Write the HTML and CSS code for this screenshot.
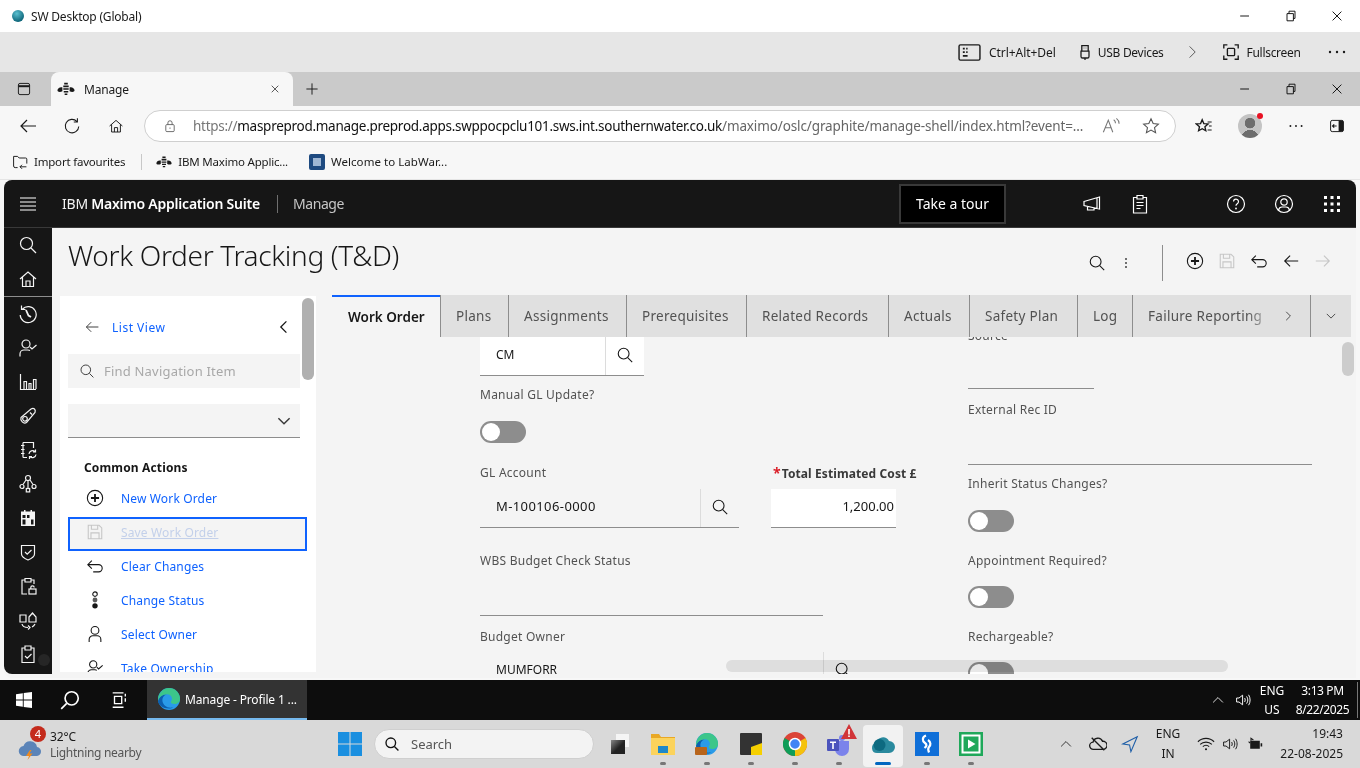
FILE: index.html
```html
<!DOCTYPE html>
<html lang="en">
<head>
    <meta charset="UTF-8">
    <meta name="viewport" content="width=device-width, initial-scale=1.0">
    <title>Manage</title>
    <link rel="stylesheet" href="styles.css">
</head>
<body>

<svg class="sprite" aria-hidden="true">
    <symbol id="i-search" viewBox="0 0 20 20"><circle cx="8.5" cy="8.5" r="6"/><path d="M13 13l5 5"/></symbol>
    <symbol id="i-home" viewBox="0 0 20 20"><path d="M2 10l8-7 8 7M4.5 8v9.5h11V8M8 17.500V12h4v5.500"/></symbol>
    <symbol id="i-history" viewBox="0 0 20 20"><path d="M4.500 5A8 8 0 1 1 2.200 11M3.500 1.500V5.500H7.500"/><path d="M8 6l2.500 5.500 2.500 1.500" stroke-width="1.800"/></symbol>
    <symbol id="i-usercheck" viewBox="0 0 20 20"><circle cx="8" cy="6" r="4"/><path d="M2 18.500V16a4 4 0 0 1 4-4h4a4 4 0 0 1 2 .6M12 9l2 2 4.500-4"/></symbol>
    <symbol id="i-chart" viewBox="0 0 20 20"><path d="M2.500 2V17.500H18M6 17V9.500H8.500V17M11 17V11.500H13V17M15.500 17V7.500H18V17"/></symbol>
    <symbol id="i-asset" viewBox="0 0 20 20"><path d="M3 11.500L13 3c3-1.500 5 .5 4 3.500L8.500 16.500c-3 2-6.500-2-5.500-5z"/><circle cx="7" cy="12.800" r="2.300"/><path d="M12 6.500l2 2"/></symbol>
    <symbol id="i-notes" viewBox="0 0 20 20"><path d="M5 2.500H15.500V8M5 17.500H9M5 2.500V17.500M3 5.500H6.500M3 9.500H6.500M3 13.500H6.500"/><path d="M11 14a3.500 3.500 0 0 1 6-2.300M18 14.500a3.500 3.500 0 0 1-6 2M17.500 9.500v2.500H15M11.500 19v-2.500H14"/></symbol>
    <symbol id="i-tree" viewBox="0 0 20 20"><circle cx="10" cy="4" r="2.500"/><path d="M8 6l-3 4.500M12 6l3 4.500M10 6.500v8"/><circle cx="4" cy="12.500" r="2"/><circle cx="16" cy="12.500" r="2"/><rect x="8.300" y="14.500" width="3.400" height="3.400"/></symbol>
    <symbol id="i-calendar" viewBox="0 0 20 20"><path class="solid" d="M3 3.500h3V2h1.500v1.500h5V2H14v1.500h3V18H3zM4.500 7v3h3V7zm4.500 0v3h2.500V7zM4.500 11.500v5h3v-5zm8.500 0v5h2.500v-5z"/></symbol>
    <symbol id="i-shield" viewBox="0 0 20 20"><path d="M3.500 3.500h13V12c0 3-4 5-6.500 6-2.500-1-6.500-3-6.500-6z"/><path d="M7 10l2.200 2.200L13.500 8"/></symbol>
    <symbol id="i-cliplock" viewBox="0 0 20 20"><path d="M7 4H4v14h5M13 4h3v4M7 2.500h6V6H7z"/><rect x="11" y="13" width="7" height="5"/><path d="M12.800 13v-1.500a1.700 1.700 0 0 1 3.400 0"/></symbol>
    <symbol id="i-cycle" viewBox="0 0 20 20"><path d="M2 5h6v7H2zM11 7l3.500-4L18 7v5h-7zM4 14c.5 2.500 3 3.500 6 3.500M10 15.500l2 2-2 2M17 14c-.5 1-1 2-3 3"/></symbol>
    <symbol id="i-clipcheck" viewBox="0 0 20 20"><path d="M7 4H4v14.500h12V4h-3M7 2h6v4H7zM7 12l2.200 2.200L13.500 10"/></symbol>
    <symbol id="i-arrow" viewBox="0 0 20 20"><path d="M18 10H3M9 4l-6 6 6 6"/></symbol>
    <symbol id="i-arrow-r" viewBox="0 0 20 20"><path d="M2 10h15M11 4l6 6-6 6"/></symbol>
    <symbol id="i-chev-l" viewBox="0 0 20 20"><path d="M13 3l-7 7 7 7"/></symbol>
    <symbol id="i-chev-r" viewBox="0 0 20 20"><path d="M7 3l7 7-7 7"/></symbol>
    <symbol id="i-chev-d" viewBox="0 0 20 20"><path d="M3 6.500l7 7 7-7"/></symbol>
    <symbol id="i-chev-u" viewBox="0 0 20 20"><path d="M3 13.500l7-7 7 7"/></symbol>
    <symbol id="i-plus" viewBox="0 0 20 20"><circle cx="10" cy="10" r="8.500"/><path d="M10 5.500v9M5.500 10h9" stroke-width="2"/></symbol>
    <symbol id="i-save" viewBox="0 0 20 20"><path d="M2.500 2.500h12l3 3v12h-15zM6 2.500V7h7V2.500M5.500 17.500V11h9v6.500"/></symbol>
    <symbol id="i-undo" viewBox="0 0 20 20"><path d="M6.500 4L2 8.500 6.500 13M2 8.500h12a4 4 0 0 1 0 8H8"/></symbol>
    <symbol id="i-status" viewBox="0 0 20 20"><circle cx="10" cy="3.500" r="2.500"/><circle class="solid" cx="10" cy="10" r="2.700" opacity=".7"/><circle class="solid" cx="10" cy="16.500" r="3"/></symbol>
    <symbol id="i-user" viewBox="0 0 20 20"><circle cx="10" cy="6" r="4.300"/><path d="M3.500 19v-3a4 4 0 0 1 4-4h5a4 4 0 0 1 4 4v3"/></symbol>
    <symbol id="i-megaphone" viewBox="0 0 20 20"><path d="M2 7.500L17.500 3v12L2 11.500zM5.500 12.500V16H12v-2.200M15 4v10.500"/></symbol>
    <symbol id="i-report" viewBox="0 0 20 20"><path d="M7 3.500H3.500V19h13V3.500H13M7 1.500h6V5H7zM6.500 8.500h7M6.500 11.500h7M6.500 14.500h4"/></symbol>
    <symbol id="i-help" viewBox="0 0 20 20"><circle cx="10" cy="10" r="8.500"/><path d="M7.500 7.500a2.500 2.500 0 1 1 3.800 2.200c-.8.500-1.300 1-1.300 2"/><circle class="solid" cx="10" cy="14.500" r=".9"/></symbol>
    <symbol id="i-account" viewBox="0 0 20 20"><circle cx="10" cy="10" r="8.500"/><circle cx="10" cy="8" r="3.200"/><path d="M4.500 16c.5-2 2-3 3.500-3h4c1.500 0 3 1 3.500 3"/></symbol>
    <symbol id="i-grid" viewBox="0 0 20 20"><path class="solid" d="M2 2h3v3H2zM8.500 2h3v3h-3zM15 2h3v3h-3zM2 8.500h3v3H2zM8.500 8.500h3v3h-3zM15 8.500h3v3h-3zM2 15h3v3H2zM8.500 15h3v3h-3zM15 15h3v3h-3z"/></symbol>
    <symbol id="i-menu" viewBox="0 0 20 20"><path d="M2 4h16M2 8h16M2 12h16M2 16h16"/></symbol>
    <symbol id="i-dots-v" viewBox="0 0 20 20"><path class="solid" d="M9 4h2v2H9zM9 9h2v2H9zM9 14h2v2H9z"/></symbol>
    <symbol id="i-dots-h" viewBox="0 0 20 20"><circle class="solid" cx="3" cy="10" r="1.200"/><circle class="solid" cx="10" cy="10" r="1.200"/><circle class="solid" cx="17" cy="10" r="1.200"/></symbol>
    <symbol id="i-min" viewBox="0 0 20 20"><path d="M4 10h11"/></symbol>
    <symbol id="i-restore" viewBox="0 0 20 20"><path d="M5 7h8v9H5zM7.500 7V4H15v9h-2"/></symbol>
    <symbol id="i-close" viewBox="0 0 20 20"><path d="M4.500 4.500l11 11M15.500 4.500l-11 11"/></symbol>
    <symbol id="i-newtab" viewBox="0 0 20 20"><path d="M10 3v14M3 10h14"/></symbol>
    <symbol id="i-tabs" viewBox="0 0 20 20"><rect x="3" y="3" width="14" height="14" rx="2"/><path d="M3 6.500h14" stroke-width="2.500"/></symbol>
    <symbol id="i-refresh" viewBox="0 0 20 20"><path d="M15.500 5A7.500 7.500 0 1 0 17.500 10.500M16 1.500V5.500H12"/></symbol>
    <symbol id="i-lock" viewBox="0 0 20 20"><rect x="4" y="8" width="12" height="10" rx="1.500"/><path d="M7 8V5.500a3 3 0 0 1 6 0V8"/><circle class="solid" cx="10" cy="13" r=".9"/></symbol>
    <symbol id="i-read" viewBox="0 0 20 20"><path d="M1.500 17L7 3.500 12 17M3.500 12h7M13 3c1.500 1 2 2.500 2 4M16 1.500c2 1.500 3 3.500 3 6"/></symbol>
    <symbol id="i-star" viewBox="0 0 20 20"><path d="M10 2l2.400 5.300 5.800.6-4.300 3.900 1.200 5.700-5.100-2.900-5.100 2.900 1.200-5.700-4.300-3.900 5.800-.6z"/></symbol>
    <symbol id="i-favs" viewBox="0 0 20 20"><path d="M8 3l1.800 4.300 4.700.4-3.500 3 1 4.600L8 13l-4 2.300 1-4.600-3.500-3 4.700-.4z" stroke-width="1.500"/><path d="M14 5.500h4.500M15.500 10h3M14 14.500h4.500"/></symbol>
    <symbol id="i-split" viewBox="0 0 20 20"><rect x="2" y="3" width="16" height="14" rx="2"/><path class="solid" d="M12 3h4a2 2 0 0 1 2 2v10a2 2 0 0 1-2 2h-4z"/><path d="M9.500 10h-5M6.500 8l-2 2 2 2" stroke-width="1.500"/></symbol>
    <symbol id="i-keyboard" viewBox="0 0 24 20"><rect x="1" y="2" width="22" height="16" rx="1.500" stroke-width="1.500"/><path d="M5 6h2M8.500 6h1.500M5 9.500h2M8.500 9.500h1.500M5 13.500h5" stroke-width="1.800"/></symbol>
    <symbol id="i-usb" viewBox="0 0 20 20"><path d="M6 2h8v7H6zM5 9h10v6.500a2 2 0 0 1-2 2H7a2 2 0 0 1-2-2zM10 17.500V20M8.500 5h.5M11 5h.5" stroke-width="1.600"/></symbol>
    <symbol id="i-fullscreen" viewBox="0 0 20 20"><path d="M2 6V2h4M14 2h4v4M18 14v4h-4M6 18H2v-4" stroke-width="1.500"/><rect x="6" y="6" width="8" height="8" rx="1" stroke-width="1.500"/></symbol>
    <symbol id="i-import" viewBox="0 0 20 20"><path d="M7 17H4a2 2 0 0 1-2-2V3h5l2 2h8a1.500 1.500 0 0 1 1.500 1.500V12M10 16h8M12.500 13.500L10 16l2.500 2.500"/></symbol>
    <symbol id="i-bee" viewBox="0 0 20 20"><path class="solid" d="M8 3h4v2H8zM7 6h6v2H7zM7 9.300h6v1.600H7zM7.500 12.200h5v1.600h-5zM8.500 15h3v1.600h-3zM.500 11.500c0-2.300 3-4.200 5.500-3.300v4.300c-2 1-5.500 1.200-5.500-1zM19.500 11.500c0-2.300-3-4.200-5.500-3.300v4.300c2 1 5.500 1.200 5.500-1z"/></symbol>
    <symbol id="i-speaker" viewBox="0 0 20 20"><path d="M2 7.500h3L9.500 4v12L5 12.500H2zM12 7.500c1 1.500 1 3.500 0 5M14.500 5.500c2 3 2 6 0 9M17 3.500c2.500 4 2.500 9 0 13"/></symbol>
    <symbol id="i-wifi" viewBox="0 0 20 20"><path d="M1 7.500c5-5 13-5 18 0M3.500 10.500c3.500-3.500 9.500-3.500 13 0M6.500 13c2-2 5-2 7 0"/><circle class="solid" cx="10" cy="15.800" r="1.200"/></symbol>
    <symbol id="i-battery" viewBox="0 0 20 20"><path class="solid" d="M4 6h12v10H4zM17 9h2v4h-2z"/><path d="M5 6V3l3 2M2 7l2 2" stroke-width="1.400"/></symbol>
    <symbol id="i-cloudoff" viewBox="0 0 20 20"><path d="M5 16a4 4 0 0 1-.5-8 5.500 5.500 0 0 1 10.500-1 4.500 4.500 0 0 1 1 9zM3 3l14 14" stroke-width="1.500"/></symbol>
    <symbol id="i-nav" viewBox="0 0 20 20"><path d="M18 2L2 10l7.500 1 1.500 7.500z"/></symbol>
    <symbol id="i-edge" viewBox="0 0 24 24"><circle class="edge-base" cx="12" cy="12" r="11"/><path class="edge-low" d="M1 13.500C2 10 5.500 7.200 9.500 7.200 6.500 8.500 5 11 5.400 14c.6 4.500 5.600 8 11 6.200-1.300.8-2.800 1.300-4.400 1.300-6 0-11-3.500-11-8z"/><path class="edge-top" d="M12 1a11 11 0 0 1 11 11c0 3.200-2.700 5-5.500 5-2.200 0-3.700-1-3.700-2 0-.8 1.200-1.400 1.200-3A5 5 0 0 0 10 7.200C5.500 7.200 2 10.500 1 14 .5 7 5.500 1 12 1z"/></symbol>
</svg>

<div class="titlebar">
    <span class="orb"></span>
    <span class="title-text">SW Desktop (Global)</span>
    <div class="win-btns">
        <button class="win-btn"><svg class="ic ic-16"><use href="#i-min"/></svg></button>
        <button class="win-btn"><svg class="ic ic-16"><use href="#i-restore"/></svg></button>
        <button class="win-btn"><svg class="ic ic-16"><use href="#i-close"/></svg></button>
    </div>
</div>

<div class="remote-bar">
    <svg class="ic kb-icon"><use href="#i-keyboard"/></svg>
    <span class="remote-label">Ctrl+Alt+Del</span>
    <svg class="ic ic-16 usb-icon"><use href="#i-usb"/></svg>
    <span class="remote-label">USB Devices</span>
    <svg class="ic ic-16 remote-chev"><use href="#i-chev-r"/></svg>
    <svg class="ic fs-icon"><use href="#i-fullscreen"/></svg>
    <span class="remote-label">Fullscreen</span>
    <svg class="ic ic-20 remote-more"><use href="#i-dots-h"/></svg>
</div>

<div class="tabstrip">
    <svg class="ic ic-16 tabs-icon"><use href="#i-tabs"/></svg>
    <div class="browser-tab">
        <svg class="ic ic-18"><use href="#i-bee"/></svg>
        <span class="browser-tab-name">Manage</span>
        <svg class="ic ic-12 browser-tab-close"><use href="#i-close"/></svg>
    </div>
    <svg class="ic ic-16 newtab"><use href="#i-newtab"/></svg>
    <div class="win-btns">
        <button class="win-btn"><svg class="ic ic-16"><use href="#i-min"/></svg></button>
        <button class="win-btn"><svg class="ic ic-16"><use href="#i-restore"/></svg></button>
        <button class="win-btn"><svg class="ic ic-16"><use href="#i-close"/></svg></button>
    </div>
</div>

<div class="addressbar">
    <svg class="ic ic-20 nav-back"><use href="#i-arrow"/></svg>
    <svg class="ic ic-18 nav-refresh"><use href="#i-refresh"/></svg>
    <svg class="ic ic-16 nav-home"><use href="#i-home"/></svg>
    <div class="urlbox">
        <svg class="ic ic-14 url-lock"><use href="#i-lock"/></svg>
        <span class="url"><span class="url-dim">https://</span>maspreprod.manage.preprod.apps.swppocpclu101.sws.int.southernwater.co.uk<span class="url-path">/maximo/oslc/graphite/manage-shell/index.html?event=...</span></span>
        <svg class="ic ic-18 url-read"><use href="#i-read"/></svg>
        <svg class="ic ic-18 url-star"><use href="#i-star"/></svg>
    </div>
    <svg class="ic ic-18 bar-favs"><use href="#i-favs"/></svg>
    <span class="avatar"><span class="avatar-dot"></span></span>
    <svg class="ic ic-16 bar-more"><use href="#i-dots-h"/></svg>
    <svg class="ic ic-16 bar-split"><use href="#i-split"/></svg>
</div>

<div class="bookmarks">
    <svg class="ic ic-16"><use href="#i-import"/></svg>
    <span class="bm-text">Import favourites</span>
    <span class="bm-sep"></span>
    <svg class="ic ic-16"><use href="#i-bee"/></svg>
    <span class="bm-text">IBM Maximo Applic...</span>
    <span class="labware"></span>
    <span class="bm-text">Welcome to LabWar...</span>
</div>

<div class="app">
    <header class="app-head">
        <svg class="ic ic-20 head-menu"><use href="#i-menu"/></svg>
        <span class="brand">IBM <b>Maximo Application Suite</b></span>
        <span class="brand-sep"></span>
        <span class="brand-app">Manage</span>
        <button class="tour">Take a tour</button>
        <svg class="ic ic-20 head-megaphone"><use href="#i-megaphone"/></svg>
        <svg class="ic ic-20 head-report"><use href="#i-report"/></svg>
        <svg class="ic ic-20 head-help"><use href="#i-help"/></svg>
        <svg class="ic ic-20 head-account"><use href="#i-account"/></svg>
        <svg class="ic ic-20 head-grid"><use href="#i-grid"/></svg>
    </header>

    <div class="app-body">
        <nav class="rail">
            <svg class="ic ic-20"><use href="#i-search"/></svg>
            <svg class="ic ic-20"><use href="#i-home"/></svg>
            <span class="rail-sep"></span>
            <svg class="ic ic-20"><use href="#i-history"/></svg>
            <svg class="ic ic-20"><use href="#i-usercheck"/></svg>
            <svg class="ic ic-20"><use href="#i-chart"/></svg>
            <svg class="ic ic-20"><use href="#i-asset"/></svg>
            <svg class="ic ic-20"><use href="#i-notes"/></svg>
            <svg class="ic ic-20"><use href="#i-tree"/></svg>
            <svg class="ic ic-20"><use href="#i-calendar"/></svg>
            <svg class="ic ic-20"><use href="#i-shield"/></svg>
            <svg class="ic ic-20"><use href="#i-cliplock"/></svg>
            <svg class="ic ic-20"><use href="#i-cycle"/></svg>
            <svg class="ic ic-20"><use href="#i-clipcheck"/></svg>
            <span class="rail-ghost"></span>
        </nav>

        <main class="page">
            <div class="page-head">
                <h1 class="page-title">Work Order Tracking (T&amp;D)</h1>
                <svg class="ic ph-search"><use href="#i-search"/></svg>
                <svg class="ic ic-16 ph-dots"><use href="#i-dots-v"/></svg>
                <span class="ph-sep"></span>
                <svg class="ic ic-18 ph-btn"><use href="#i-plus"/></svg>
                <svg class="ic ic-18 ph-btn is-off"><use href="#i-save"/></svg>
                <svg class="ic ic-18 ph-btn"><use href="#i-undo"/></svg>
                <svg class="ic ic-18 ph-btn"><use href="#i-arrow"/></svg>
                <svg class="ic ic-18 ph-btn is-off"><use href="#i-arrow-r"/></svg>
            </div>

            <div class="page-body">
                <aside class="side">
                    <div class="side-back">
                        <svg class="ic ic-16"><use href="#i-arrow"/></svg>
                        <a class="link">List View</a>
                        <svg class="ic ic-16 side-collapse"><use href="#i-chev-l"/></svg>
                    </div>
                    <div class="side-find">
                        <svg class="ic ic-16"><use href="#i-search"/></svg>
                        <span>Find Navigation Item</span>
                    </div>
                    <div class="side-select"><svg class="ic ic-16"><use href="#i-chev-d"/></svg></div>
                    <div class="side-title">Common Actions</div>
                    <div class="action"><svg class="ic ic-18"><use href="#i-plus"/></svg><a class="link">New Work Order</a></div>
                    <div class="action is-focus"><svg class="ic ic-18"><use href="#i-save"/></svg><a class="link">Save Work Order</a></div>
                    <div class="action"><svg class="ic ic-18"><use href="#i-undo"/></svg><a class="link">Clear Changes</a></div>
                    <div class="action"><svg class="ic ic-18"><use href="#i-status"/></svg><a class="link">Change Status</a></div>
                    <div class="action"><svg class="ic ic-18"><use href="#i-user"/></svg><a class="link">Select Owner</a></div>
                    <div class="action"><svg class="ic ic-18"><use href="#i-usercheck"/></svg><a class="link">Take Ownership</a></div>
                    <span class="side-thumb"></span>
                </aside>

                <section class="record">
                    <div class="tabs">
                        <div class="tab is-active">Work Order</div>
                        <div class="tab">Plans</div>
                        <div class="tab">Assignments</div>
                        <div class="tab">Prerequisites</div>
                        <div class="tab">Related Records</div>
                        <div class="tab">Actuals</div>
                        <div class="tab">Safety Plan</div>
                        <div class="tab">Log</div>
                        <div class="tab tab-last"><span class="tab-fade">Failure Reporting</span><svg class="ic ic-12"><use href="#i-chev-r"/></svg></div>
                        <div class="tab tab-more"><svg class="ic ic-12"><use href="#i-chev-d"/></svg></div>
                    </div>

                    <div class="form">
                        <div class="form-col col-a">
                            <div class="lookup lookup-cm">
                                <span class="lookup-value">CM</span>
                                <span class="lookup-btn"><svg class="ic ic-18"><use href="#i-search"/></svg></span>
                            </div>
                            <label class="lbl lbl-manual">Manual GL Update?</label>
                            <span class="toggle toggle-manual"></span>

                            <div class="cost-row">
                                <label class="lbl">GL Account</label>
                                <label class="lbl lbl-req"><span class="req">*</span>Total Estimated Cost £</label>
                                <div class="lookup lookup-gl">
                                    <span class="lookup-value">M-100106-0000</span>
                                    <span class="lookup-btn"><svg class="ic ic-18"><use href="#i-search"/></svg></span>
                                </div>
                                <div class="amount">1,200.00</div>
                            </div>

                            <label class="lbl lbl-wbs">WBS Budget Check Status</label>
                            <div class="readonly"></div>
                            <label class="lbl lbl-owner">Budget Owner</label>
                            <div class="lookup lookup-owner">
                                <span class="lookup-value">MUMFORR</span>
                                <span class="lookup-btn"><svg class="ic ic-18"><use href="#i-search"/></svg></span>
                            </div>
                        </div>

                        <div class="form-col col-b">
                            <label class="lbl lbl-source">Source</label>
                            <div class="readonly readonly-short"></div>
                            <label class="lbl lbl-ext">External Rec ID</label>
                            <div class="readonly"></div>
                            <label class="lbl lbl-inherit">Inherit Status Changes?</label>
                            <span class="toggle"></span>
                            <label class="lbl lbl-appt">Appointment Required?</label>
                            <span class="toggle toggle-appt"></span>
                            <label class="lbl lbl-appt">Rechargeable?</label>
                            <span class="toggle toggle-recharge"></span>
                        </div>
                        <span class="form-vthumb"></span>
                        <span class="form-hthumb"></span>
                    </div>
                </section>
            </div>
        </main>
    </div>
</div>

<div class="taskbar-old">
    <svg class="win-logo" viewBox="0 0 16 16"><path d="M0 2.200L6.800 1.200V7.500H0zM7.700 1L16 0V7.500H7.700zM0 8.500H6.800V14.800L0 13.800zM7.700 8.500H16V16L7.700 15z"/></svg>
    <svg class="ic old-search"><use href="#i-search"/></svg>
    <svg class="old-view" viewBox="0 0 20 20"><path d="M3 2h12M5 6h8v8H5zM3 18h12M17 3v3M17 8v4" fill="none" stroke="#fff" stroke-width="1.500"/></svg>
    <div class="old-app">
        <svg class="edge-icon"><use href="#i-edge"/></svg>
        <span>Manage - Profile 1 ...</span>
    </div>
    <div class="old-tray">
        <svg class="ic ic-14"><use href="#i-chev-u"/></svg>
        <svg class="ic ic-16 old-speaker"><use href="#i-speaker"/></svg>
        <div class="old-lang">ENG<br>US</div>
        <div class="old-clock">3:13 PM<br>8/22/2025</div>
    </div>
</div>

<div class="taskbar">
    <div class="weather">
        <span class="weather-icon">
            <svg viewBox="0 0 24 24" class="weather-cloud"><path d="M6 19a5 5 0 0 1-.5-10 7 7 0 0 1 13.500 1 4.500 4.500 0 0 1-1 9z" fill="#5b84b8"/><path d="M12 13l-4 6h3l-1.500 4 5-6.500h-3l2-3.500z" fill="#f08a1d"/></svg>
            <span class="weather-badge">4</span>
        </span>
        <div class="weather-text">32°C<br><span class="weather-sub">Lightning nearby</span></div>
    </div>
    <svg class="start" viewBox="0 0 24 24"><path d="M0 0h11.500v11.500H0zM12.500 0H24v11.500H12.500zM0 12.500h11.500V24H0zM12.500 12.500H24V24H12.500z" fill="#1a8fe0"/></svg>
    <div class="tb-search">
        <svg class="ic ic-16"><use href="#i-search"/></svg>
        <span>Search</span>
    </div>
    <div class="tb-view"><span class="view-back"></span><span class="view-front"></span></div>
    <div class="tb-apps">
        <div class="tb-app has-dot">
            <svg class="app-icon" viewBox="0 0 24 24"><path d="M0 2h8l2 3h14v18H0z" fill="#e9a825"/><path d="M0 6h24v17H0z" fill="#fbd35c"/><path d="M7 14h10v7H7z" fill="#1e88c9"/></svg>
        </div>
        <div class="tb-app has-dot">
            <svg class="app-icon"><use href="#i-edge"/></svg>
            <span class="case"></span>
        </div>
        <div class="tb-app has-dot">
            <svg class="app-icon" viewBox="0 0 24 24"><rect x="1" y="1" width="22" height="22" rx="1" fill="#333"/><path d="M23 11V23H12V15z" fill="#f6d000"/></svg>
        </div>
        <div class="tb-app has-dot">
            <svg class="app-icon" viewBox="0 0 24 24"><circle cx="12" cy="12" r="12" fill="#db4437"/><path d="M12 12L22.400 6A12 12 0 0 1 12 24z" fill="#f4c20d"/><path d="M12 12L12 24A12 12 0 0 1 1.600 6z" fill="#0f9d58"/><circle cx="12" cy="12" r="5.500" fill="#4285f4" stroke="#fff" stroke-width="1.500"/></svg>
        </div>
        <div class="tb-app has-dot">
            <svg class="app-icon" viewBox="0 0 24 24"><circle cx="15" cy="6" r="3" fill="#7b83eb"/><path d="M8 9h14v8a7 7 0 0 1-14 0z" fill="#7b83eb"/><rect x="0" y="7" width="12" height="12" rx="1" fill="#4b53bc"/><path d="M3 9.500h6V11H6.800v6H5.200v-6H3z" fill="#fff"/></svg>
            <svg class="alert" viewBox="0 0 16 16"><path d="M8 0l8 15H0z" fill="#d13438"/><path d="M7.200 5h1.600v5.500H7.200zM7.200 11.500h1.600v1.600H7.200z" fill="#fff"/></svg>
        </div>
        <div class="tb-app is-open">
            <svg class="app-icon" viewBox="0 0 24 24"><path d="M6 21a5 5 0 0 1-1-9.900A7 7 0 0 1 18 9a6 6 0 0 1 0 12z" fill="#2a8a9e"/><circle cx="8.500" cy="13" r="6" fill="#0d6a80"/></svg>
        </div>
        <div class="tb-app has-dot">
            <svg class="app-icon" viewBox="0 0 24 24"><path d="M0 0h24v24H0z" fill="#0f6fd8"/><path d="M11 3.500C7 5 7 9 10 11c2 1.500 2 3-.5 5M13 8c3 2 3 5 1 7-1 1-1 3 0 5.500" fill="none" stroke="#fff" stroke-width="2.200"/></svg>
        </div>
        <div class="tb-app has-dot">
            <svg class="app-icon" viewBox="0 0 24 24"><path d="M0 0h24v24H0z" fill="#1fa85a"/><path d="M2.500 2.500h19v19h-19z" fill="#fff"/><path d="M4.500 4.500h15v15h-15z" fill="#1fa85a"/><path d="M9 7.500l7.500 4.500L9 16.500z" fill="#fff"/></svg>
        </div>
    </div>
    <div class="tb-tray">
        <svg class="ic ic-14"><use href="#i-chev-u"/></svg>
        <svg class="ic ic-18 tray-cloud"><use href="#i-cloudoff"/></svg>
        <svg class="ic ic-18 tray-nav"><use href="#i-nav"/></svg>
        <div class="tray-lang">ENG<br>IN</div>
        <svg class="ic ic-18 tray-wifi"><use href="#i-wifi"/></svg>
        <svg class="ic ic-16 tray-speaker"><use href="#i-speaker"/></svg>
        <svg class="ic ic-16 tray-battery"><use href="#i-battery"/></svg>
        <div class="tray-clock">19:43<br>22-08-2025</div>
    </div>
</div>

</body>
</html>
```

FILE: styles.css
```css
*{
    padding: 0;
    margin: 0;
    box-sizing: border-box;
}

html, body{
    width: 1360px;
    height: 768px;
    overflow: hidden;
}

body{
    background-color: #f7f7f7;
    font-family: "Noto Sans", "Open Sans", sans-serif;
    font-size: 12px;
    color: #1a1a1a;
    display: flex;
    flex-direction: column;
}

.sprite{
    display: none;
}

.ic{
    fill: none;
    stroke: currentColor;
    stroke-width: 1.2;
    flex: none;
}

.solid{
    fill: currentColor;
    stroke: none;
}

.ic-12{ width: 12px; height: 12px; }
.ic-14{ width: 14px; height: 14px; }
.ic-16{ width: 16px; height: 16px; }
.ic-18{ width: 18px; height: 18px; }
.ic-20{ width: 20px; height: 20px; }

/* remote desktop window */
.titlebar{
    height: 32px;
    flex: none;
    background-color: #fff;
    display: flex;
    align-items: center;
    padding-left: 12px;
}

.orb{
    width: 12px;
    height: 12px;
    border-radius: 50%;
    background: radial-gradient(circle at 40% 30%, #5cc0d0, #0c6478 75%);
}

.title-text{
    margin-left: 7px;
    letter-spacing: -0.2px;
}

.win-btns{
    margin-left: auto;
    display: flex;
}

.win-btn{
    width: 46px;
    height: 32px;
    border: 0;
    background: none;
    color: #111;
    display: flex;
    align-items: center;
    justify-content: center;
}

.remote-bar{
    height: 40px;
    flex: none;
    background-color: #e6e6e6;
    display: flex;
    align-items: center;
    padding-left: 958px;
}

.kb-icon{
    width: 23px;
    height: 19px;
}

.remote-label{
    margin-left: 8px;
    letter-spacing: -0.05px;
}

.usb-icon{
    margin-left: 21px;
}

.usb-icon + .remote-label{
    margin-left: 5px;
    letter-spacing: -0.3px;
}

.remote-chev{
    margin-left: 20px;
    color: #555;
}

.fs-icon{
    width: 18px;
    height: 18px;
    margin-left: 22px;
}

.fs-icon + .remote-label{
    margin-left: 7px;
    letter-spacing: -0.3px;
}

.remote-more{
    margin-left: 26px;
}

/* browser */
.tabstrip{
    height: 34px;
    flex: none;
    background-color: #cacaca;
    display: flex;
    align-items: center;
}

.tabs-icon{
    margin-left: 16px;
}

.browser-tab{
    width: 242px;
    height: 34px;
    margin-left: 19px;
    background-color: #f7f7f7;
    border-radius: 8px 8px 0 0;
    display: flex;
    align-items: center;
    padding-left: 6px;
}

.browser-tab-name{
    margin-left: 9px;
    letter-spacing: -0.2px;
}

.browser-tab-close{
    margin-left: auto;
    margin-right: 12px;
}

.newtab{
    margin-left: 11px;
}

.addressbar{
    height: 40px;
    flex: none;
    display: flex;
    align-items: center;
    color: #1a1a1a;
}

.nav-back{ margin-left: 18px; }
.nav-refresh{ margin-left: 25px; }
.nav-home{ margin-left: 27px; }

.urlbox{
    width: 1032px;
    height: 32px;
    margin-left: 20px;
    background-color: #fff;
    border: 1px solid #cfcfcf;
    border-radius: 16px;
    display: flex;
    align-items: center;
    padding-left: 18px;
}

.url-lock{ color: #555; }

.url{
    margin-left: 16px;
    width: 890px;
    font-size: 13.500px;
    letter-spacing: -0.28px;
    white-space: nowrap;
    overflow: hidden;
    color: #111;
}

.url-dim{ color: #777; }

.url-path{
    color: #666;
    letter-spacing: -0.12px;
}

.url-read{
    margin-left: 19px;
    color: #777;
}

.url-star{
    margin-left: 22px;
    color: #555;
}

.bar-favs{ margin-left: 19px; }

.avatar{
    width: 24px;
    height: 24px;
    margin-left: 25px;
    border-radius: 50%;
    background-color: #c4c4c4;
    position: relative;
    background-image: radial-gradient(circle at 50% 38%, #6d6d6d 0 5px, transparent 5.500px), radial-gradient(ellipse 8px 6px at 50% 92%, #6d6d6d 0 100%, transparent 100%);
}

.avatar-dot{
    position: absolute;
    right: -1px;
    top: -1px;
    width: 6px;
    height: 6px;
    border-radius: 50%;
    background-color: #e81123;
}

.bar-more{ margin-left: 26px; }
.bar-split{ margin-left: 25px; }

.bookmarks{
    height: 34px;
    flex: none;
    display: flex;
    align-items: center;
    padding: 0 0 2px 12px;
    border-bottom: 1px solid #e5e5e5;
}

.bm-text{
    margin-left: 6px;
    font-size: 11.500px;
    letter-spacing: -0.2px;
}

.bm-sep{
    width: 1px;
    height: 16px;
    margin: 0 14px 0 16px;
    background-color: #c8c8c8;
}

.labware{
    width: 16px;
    height: 16px;
    margin-left: 21px;
    border-radius: 2px;
    background-color: #1e4a80;
    border: 4px solid #1e4a80;
    background-clip: padding-box;
    box-shadow: inset 0 0 0 8px #9fb7d4;
}

.labware + .bm-text{
    letter-spacing: 0.05px;
}

/* maximo app */
.app{
    height: 498px;
    flex: none;
    margin: 0 4px;
    background-color: #f4f4f4;
    border-radius: 8px 8px 0 8px;
    overflow: hidden;
    display: flex;
    flex-direction: column;
}

.app-head{
    height: 48px;
    flex: none;
    background-color: #161616;
    border-bottom: 1px solid #393939;
    color: #fff;
    display: flex;
    align-items: center;
}

.head-menu{ margin-left: 14px; }

.brand{
    margin-left: 24px;
    font-size: 14px;
    letter-spacing: -0.23px;
    color: #f4f4f4;
}

.brand b{
    font-weight: 600;
    color: #fff;
}

.brand-sep{
    width: 1px;
    height: 18px;
    margin-left: 17px;
    background-color: #6f6f6f;
}

.brand-app{
    margin-left: 15px;
    font-size: 14px;
    letter-spacing: -0.4px;
    color: #c6c6c6;
}

.tour{
    width: 107px;
    height: 40px;
    margin-left: auto;
    background-color: #000;
    border: 2px solid #393939;
    color: #fff;
    font-family: inherit;
    font-size: 14px;
}

.head-megaphone{ margin-left: 76px; }
.head-report{ margin-left: 28px; }
.head-help{ margin-left: 76px; }
.head-account{ margin-left: 28px; }
.head-grid{ margin-left: 28px; margin-right: 14px; }

.app-body{
    flex: 1;
    min-height: 0;
    display: flex;
}

.rail{
    width: 48px;
    flex: none;
    height: 446px;
    background-color: #161616;
    border-radius: 0 0 0 8px;
    color: #f4f4f4;
    display: flex;
    flex-direction: column;
    align-items: center;
    padding-top: 7px;
    position: relative;
}

.rail .ic{
    margin-bottom: 14px;
}

.rail-sep{
    width: 100%;
    height: 1px;
    flex: none;
    margin: -7px 0 7px;
    background-color: #8d8d8d;
}

.rail-ghost{
    position: absolute;
    left: 34px;
    top: 426px;
    width: 12px;
    height: 12px;
    border-radius: 50%;
    background-color: #262626;
}

.page{
    flex: 1;
    min-width: 0;
    display: flex;
    flex-direction: column;
}

.page-head{
    height: 67px;
    flex: none;
    display: flex;
    align-items: center;
    padding-left: 16px;
    color: #161616;
}

.page-title{
    font-size: 28px;
    font-weight: 300;
    letter-spacing: -0.32px;
    margin-top: -13px;
    color: #161616;
}

.ph-search{
    width: 18px;
    height: 18px;
    margin-left: auto;
    margin-top: 2px;
}

.ph-dots{
    margin-left: 12px;
    margin-top: 2px;
}

.ph-sep{
    width: 1px;
    height: 36px;
    margin-left: 28px;
    margin-right: 23px;
    margin-top: 2px;
    background-color: #8d8d8d;
}

.ph-btn{
    margin-right: 14px;
    margin-top: -1px;
}

.ph-btn.is-off{
    color: #c6c6c6;
}

.ph-btn:last-child{
    margin-right: 24px;
}

.page-body{
    flex: 1;
    min-height: 0;
    display: flex;
    height: 378px;
    padding-left: 8px;
}

/* left panel */
.side{
    width: 256px;
    height: 376px;
    flex: none;
    margin-top: 1px;
    background-color: #fff;
    padding: 14px 16px 0 8px;
    position: relative;
    overflow: hidden;
}

.link{
    color: #0f62fe;
    font-size: 12px;
    letter-spacing: .15px;
}

.side-back{
    height: 34px;
    display: flex;
    align-items: center;
    padding-left: 16px;
}

.side-back .ic{ color: #393939; }

.side-back .link{
    margin-left: 12px;
    letter-spacing: .5px;
}

.side-back .side-collapse{
    margin-left: auto;
    margin-right: 8px;
    color: #161616;
    stroke-width: 1.600;
}

.side-find{
    height: 34px;
    margin-top: 10px;
    background-color: #f4f4f4;
    display: flex;
    align-items: center;
    padding: 0 0 1px 11px;
    color: #a8a8a8;
    font-size: 13px;
    letter-spacing: .2px;
}

.side-find .ic{
    color: #393939;
}

.side-find span{
    margin-left: 9px;
}

.side-select{
    height: 34px;
    margin-top: 16px;
    background-color: #f4f4f4;
    border-bottom: 1px solid #8d8d8d;
    display: flex;
    align-items: center;
    justify-content: flex-end;
    padding-right: 8px;
    color: #393939;
}

.side-select .ic{
    stroke-width: 1.800;
}

.side-title{
    height: 18px;
    line-height: 20px;
    margin-top: 20px;
    margin-bottom: 5px;
    padding-left: 16px;
    font-size: 12px;
    font-weight: 700;
    letter-spacing: .15px;
    color: #161616;
}

.action{
    height: 34px;
    display: flex;
    align-items: center;
    padding-left: 18px;
    position: relative;
    color: #161616;
}

.action .link{
    margin-left: 17px;
    position: relative;
}

.action .ic{
    position: relative;
}

.action.is-focus::before{
    content: "";
    position: absolute;
    left: 0;
    right: -7px;
    top: 2px;
    bottom: -2px;
    background-color: #f4f4f4;
    border: 2px solid #0f62fe;
}

.action.is-focus .ic{ color: #c6c6c6; }

.action.is-focus .link{
    color: #c3d0ea;
    text-decoration: underline;
}

.side-thumb{
    position: absolute;
    right: 2px;
    top: 2px;
    width: 12px;
    height: 82px;
    border-radius: 6px;
    background-color: #b0b0b0;
}

/* record tabs */
.record{
    margin-left: 16px;
    flex: none;
    width: 1024px;
    display: flex;
    flex-direction: column;
    min-height: 0;
}

.tabs{
    height: 42px;
    flex: none;
    width: 1019px;
    display: grid;
    grid-template-columns: 108px 68px 118px 120px 142px 81px 108px 55px 178px 41px;
    font-size: 13.500px;
}

.tab{
    background-color: #e0e0e0;
    border-left: 1px solid #8d8d8d;
    display: flex;
    align-items: center;
    padding-left: 15px;
    color: #525252;
    white-space: nowrap;
    overflow: hidden;
    letter-spacing: .28px;
}

.tab.is-active{
    background-color: #f4f4f4;
    border-left: 0;
    border-top: 2px solid #0f62fe;
    color: #161616;
    font-weight: 600;
    letter-spacing: 0;
    padding-left: 16px;
}

.tab-last{
    justify-content: space-between;
    padding-right: 16px;
}

.tab-last .ic,
.tab-more .ic{
    color: #161616;
}

.tab-fade{
    width: 116px;
    overflow: hidden;
    -webkit-mask-image: linear-gradient(90deg, #000 85%, rgba(0,0,0,.4));
    mask-image: linear-gradient(90deg, #000 85%, rgba(0,0,0,.4));
}

.tab-more{
    padding-left: 14px;
}

/* form, scrolled a little way down */
.form{
    height: 337px;
    position: relative;
    overflow: hidden;
    display: flex;
    padding-left: 148px;
}

.form-col{
    flex: none;
    margin-top: -13px;
    display: flex;
    flex-direction: column;
    align-items: flex-start;
}

.col-a{
    width: 488px;
    padding-top: 13px;
}

.col-b{
    width: 344px;
}

.lbl{
    display: block;
    height: 18px;
    line-height: 20px;
    font-size: 12px;
    letter-spacing: .25px;
    color: #525252;
    white-space: nowrap;
}

.lookup{
    height: 39px;
    flex: none;
    border-bottom: 1px solid #8d8d8d;
    display: flex;
    font-size: 12px;
    color: #161616;
}

.lookup-value{
    flex: 1;
    padding-left: 16px;
    line-height: 35px;
}

.lookup-btn{
    width: 39px;
    flex: none;
    border-left: 1px solid #dcdcdc;
    display: flex;
    align-items: center;
    justify-content: center;
    padding-bottom: 3px;
}

.lookup-cm{
    width: 164px;
    background-color: #fff;
}

.lbl-manual{ margin-top: 9px; }

.toggle{
    width: 46px;
    height: 22px;
    flex: none;
    margin-top: 18px;
    border-radius: 11px;
    background-color: #8d8d8d;
    position: relative;
}

.toggle::before{
    content: "";
    position: absolute;
    left: 2px;
    top: 2px;
    width: 18px;
    height: 18px;
    border-radius: 50%;
    background-color: #fff;
}

.cost-row{
    margin-top: 20px;
    display: grid;
    grid-template-columns: 291px 125px;
    row-gap: 8px;
}

.lbl-req{
    font-weight: 700;
    color: #393939;
    letter-spacing: .1px;
    margin-left: 2px;
}

.req{
    color: #da1e28;
    font-size: 14px;
    margin-right: 1px;
}

.lookup-gl{
    width: 259px;
}

.lookup-gl .lookup-value{
    font-size: 13px;
    letter-spacing: .4px;
}

.amount{
    height: 39px;
    background-color: #fff;
    border-bottom: 1px solid #8d8d8d;
    text-align: right;
    line-height: 35px;
    padding-right: 2px;
    font-size: 13px;
    color: #161616;
}

.lbl-wbs{ margin-top: 23px; }

.readonly{
    width: 100%;
    height: 47px;
    flex: none;
    border-bottom: 1px solid #8d8d8d;
}

.col-a .readonly{
    width: 343px;
}

.readonly-short{
    width: 126px;
    height: 45px;
}

.lbl-source{ margin-top: 2px; }

.lbl-owner{ margin-top: 11px; }

.lookup-owner{
    margin-top: 7px;
    width: 382px;
    align-items: stretch;
}

.lookup-owner .lookup-value{
    line-height: 36px;
}

.lbl-ext{ margin-top: 11px; }
.lbl-inherit{ margin-top: 9px; }
.lbl-appt{ margin-top: 19px; }
.toggle-appt{ margin-top: 17px; }
.toggle-recharge{ margin-top: 17px; }

.form-vthumb{
    position: absolute;
    right: 2px;
    top: 5px;
    width: 12px;
    height: 34px;
    border-radius: 6px;
    background-color: #ccc;
}

.form-hthumb{
    position: absolute;
    left: 394px;
    top: 323px;
    width: 502px;
    height: 12px;
    border-radius: 6px;
    background-color: #e8e8e8;
    mix-blend-mode: multiply;
}

/* old windows taskbar inside the remote session */
.taskbar-old{
    height: 40px;
    flex: none;
    margin-top: 2px;
    background-color: #0d0d0d;
    color: #fff;
    display: flex;
    align-items: center;
}

.win-logo{
    width: 16px;
    height: 16px;
    margin-left: 16px;
    fill: #fff;
}

.old-search{
    width: 22px;
    height: 22px;
    margin-left: 27px;
    transform: scaleX(-1);
    stroke-width: 1.500;
}

.old-view{
    width: 18px;
    height: 18px;
    margin-left: 29px;
}

.old-app{
    width: 160px;
    height: 40px;
    margin-left: 19px;
    background-color: #333;
    border-bottom: 2px solid #76b9ed;
    display: flex;
    align-items: center;
    padding-left: 10px;
}

.old-app span{
    margin-left: 4px;
    letter-spacing: -0.15px;
}

.edge-icon{
    width: 24px;
    height: 24px;
}

.edge-base{ fill: #2a9be8; }
.edge-top{ fill: #3cc68a; }
.edge-low{ fill: #0c5fae; }

.old-tray{
    margin-left: auto;
    display: flex;
    align-items: center;
    text-align: center;
    line-height: 19px;
    margin-right: 2px;
    padding-right: 5px;
    height: 36px;
    border-right: 1px solid #777;
}

.old-speaker{ margin-left: 10px; }

.old-lang{
    width: 40px;
    margin-left: 1px;
}

.old-clock{
    margin-left: 1px;
    width: 59px;
    letter-spacing: -0.4px;
}

/* windows 11 taskbar */
.taskbar{
    height: 48px;
    flex: none;
    background-color: #d9d9d9;
    display: flex;
    align-items: center;
}

.weather{
    width: 338px;
    flex: none;
    display: flex;
    align-items: center;
    padding-left: 18px;
}

.weather-icon{
    width: 28px;
    height: 34px;
    position: relative;
}

.weather-cloud{
    width: 24px;
    height: 24px;
    position: absolute;
    left: 0;
    bottom: 0;
}

.weather-badge{
    position: absolute;
    left: 12px;
    top: -1px;
    width: 16px;
    height: 16px;
    border-radius: 50%;
    background-color: #c42b1c;
    color: #fff;
    text-align: center;
    line-height: 16px;
    font-size: 11px;
}

.weather-text{
    margin: 2px 0 0 4px;
    line-height: 16px;
    letter-spacing: -0.1px;
}

.weather-sub{
    color: #555;
    letter-spacing: -0.3px;
}

.start{
    width: 24px;
    height: 24px;
    flex: none;
}

.tb-search{
    width: 220px;
    height: 30px;
    margin-left: 12px;
    background-color: #f3f3f3;
    border: 1px solid #cfcfcf;
    border-radius: 15px;
    display: flex;
    align-items: center;
    padding-left: 9px;
    font-size: 13px;
    color: #555;
}

.tb-search .ic{
    color: #111;
    stroke-width: 1.700;
}

.tb-search span{
    margin-left: 11px;
}

.tb-view{
    width: 18px;
    height: 20px;
    margin-left: 17px;
    position: relative;
}

.view-back{
    position: absolute;
    right: 0;
    top: 0;
    width: 13px;
    height: 13px;
    background-color: #f5f5f5;
}

.view-front{
    position: absolute;
    left: 0;
    bottom: 0;
    width: 14px;
    height: 14px;
    background: linear-gradient(135deg, #888, #222 55%);
}

.tb-apps{
    display: flex;
    margin-left: 12px;
}

.tb-app{
    width: 44px;
    height: 48px;
    display: flex;
    align-items: center;
    justify-content: center;
    position: relative;
}

.app-icon{
    width: 24px;
    height: 24px;
}

.has-dot::after{
    content: "";
    position: absolute;
    left: 19px;
    bottom: 3px;
    width: 6px;
    height: 3px;
    border-radius: 2px;
    background-color: #777;
}

.is-open::before{
    content: "";
    position: absolute;
    left: 2px;
    right: 2px;
    top: 5px;
    bottom: 1px;
    border-radius: 4px;
    background-color: #f2f2f2;
}

.is-open .app-icon{
    position: relative;
}

.is-open::after{
    content: "";
    position: absolute;
    left: 14px;
    bottom: 3px;
    width: 16px;
    height: 3px;
    border-radius: 2px;
    background-color: #0067c0;
}

.alert{
    position: absolute;
    right: 4px;
    top: 4px;
    width: 16px;
    height: 16px;
}

.case{
    position: absolute;
    left: 10px;
    top: 27px;
    width: 12px;
    height: 8px;
    background-color: #b8651b;
    border-radius: 1px;
}

.tb-tray{
    margin-left: auto;
    display: flex;
    align-items: center;
    padding-right: 17px;
    color: #1a1a1a;
}

.tray-cloud{ margin-left: 16px; }

.tray-nav{
    margin-left: 14px;
    color: #1f5fa8;
}

.tray-lang{
    width: 40px;
    margin-left: 9px;
    text-align: center;
    line-height: 20px;
}

.tray-wifi{ margin-left: 9px; }
.tray-speaker{ margin-left: 7px; }
.tray-battery{ margin-left: 9px; }

.tray-clock{
    width: 68px;
    margin-left: 12px;
    text-align: right;
    line-height: 20px;
}
```
